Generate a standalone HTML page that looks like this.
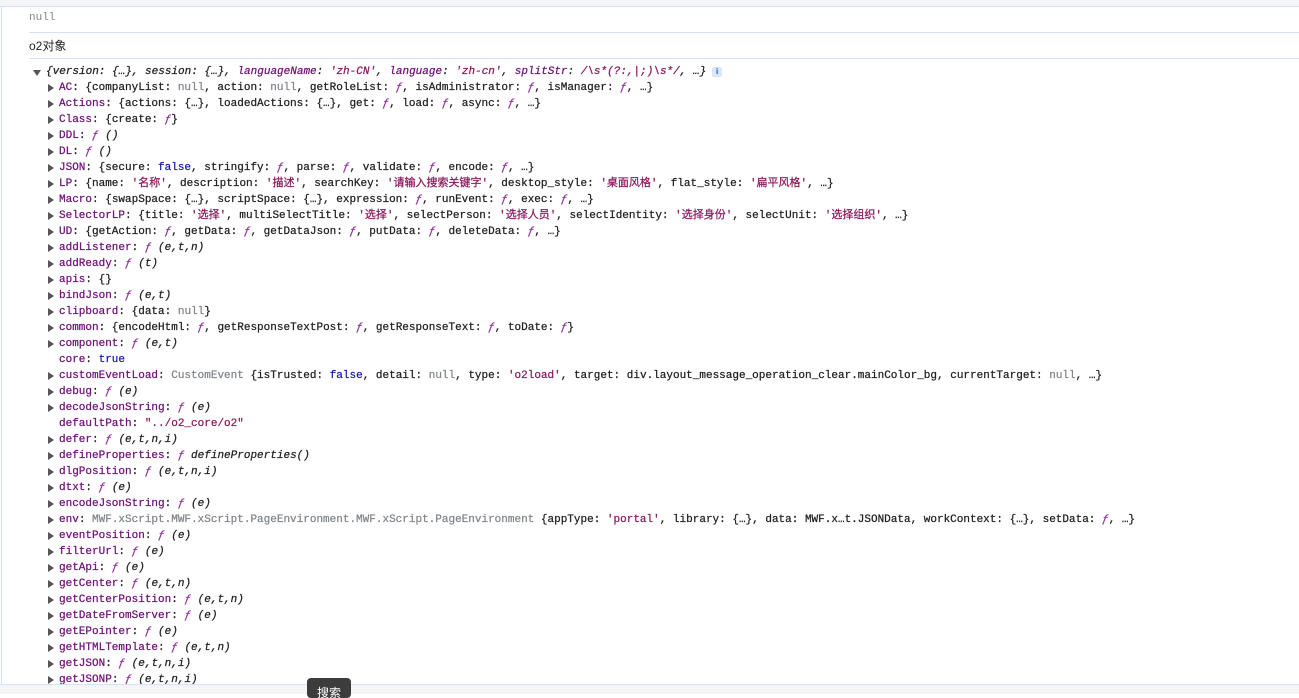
<!DOCTYPE html>
<html><head><meta charset="utf-8"><style>
body{margin:0;width:1299px;height:693px;overflow:hidden;background:#fff;position:relative;font-family:"Liberation Sans","Noto Sans CJK SC",sans-serif}
.top{position:absolute;left:0;top:0;width:1299px;height:6px;background:#f5f5f5;border-bottom:1px solid #d3e1fb}
.box{position:absolute;left:1px;top:7px;width:1298px;height:677px;border-left:1px solid #d3e1fb}
.hr{position:absolute;left:29px;right:0;height:1px;background:#d3e1fb}
.bot{position:absolute;left:0;top:684px;width:1299px;height:9px;background:#f5f5f5;border-top:1px solid #d3e1fb;z-index:2}
.null{position:absolute;left:29px;top:12px;font:11px "Liberation Mono",monospace;color:#80868b}
.o2{position:absolute;left:29px;top:37px;font-size:12px;color:#222}
.c{position:absolute;left:0;top:64px;font:11px/16px "Liberation Mono","Noto Sans CJK SC",monospace;color:#202124;white-space:nowrap;-webkit-text-stroke:0.25px}
.r{height:16px;position:relative;padding-left:59px}
.r.root{padding-left:46px}
.r.a::before{content:"";position:absolute;left:48px;top:4px;border-left:6px solid #555;border-top:4px solid transparent;border-bottom:4px solid transparent}
.root::before{content:"";position:absolute;left:33px;top:6px;border-top:6px solid #555;border-left:4px solid transparent;border-right:4px solid transparent}
.k{color:#6e1077}
.s{color:#8b1a5c}
.n{color:#80868b}
.b{color:#1a1aa6}
.f{color:#9230a0;font-style:italic}
.i{font-style:italic}
.it{font-style:italic}
.info{display:inline-block;width:10px;height:10px;background:#dbe6fb;color:#1a55c9;font:bold 8px/10px "Liberation Sans",sans-serif;text-align:center;border-radius:2px;margin-left:6px;vertical-align:0;-webkit-text-stroke:0}
.tip{position:absolute;left:307px;top:678px;width:44px;height:20px;background:#3c3c3c;border-radius:4px;color:#fff;font-size:12px;text-align:center;line-height:30px;z-index:3;overflow:hidden}
</style></head><body>
<div class="top"></div>
<div class="box"></div>
<div class="null">null</div>
<div class="hr" style="top:32px"></div>
<div class="o2">o2对象</div>
<div class="hr" style="top:58px"></div>
<div class="c"><div class="r root it">{version: {…}, session: {…}, <span class="k">languageName</span>: <span class="s">'zh-CN'</span>, <span class="k">language</span>: <span class="s">'zh-cn'</span>, <span class="k">splitStr</span>: <span class="s">/\s*(?:,|;)\s*/</span>, …}<span class="info">i</span></div><div class="r a"><span class="k">AC</span>: {companyList: <span class="n">null</span>, action: <span class="n">null</span>, getRoleList: <span class="f">ƒ</span>, isAdministrator: <span class="f">ƒ</span>, isManager: <span class="f">ƒ</span>, …}</div><div class="r a"><span class="k">Actions</span>: {actions: {…}, loadedActions: {…}, get: <span class="f">ƒ</span>, load: <span class="f">ƒ</span>, async: <span class="f">ƒ</span>, …}</div><div class="r a"><span class="k">Class</span>: {create: <span class="f">ƒ</span>}</div><div class="r a"><span class="k">DDL</span>: <span class="f">ƒ</span> <span class="i">()</span></div><div class="r a"><span class="k">DL</span>: <span class="f">ƒ</span> <span class="i">()</span></div><div class="r a"><span class="k">JSON</span>: {secure: <span class="b">false</span>, stringify: <span class="f">ƒ</span>, parse: <span class="f">ƒ</span>, validate: <span class="f">ƒ</span>, encode: <span class="f">ƒ</span>, …}</div><div class="r a"><span class="k">LP</span>: {name: <span class="s">'名称'</span>, description: <span class="s">'描述'</span>, searchKey: <span class="s">'请输入搜索关键字'</span>, desktop_style: <span class="s">'桌面风格'</span>, flat_style: <span class="s">'扁平风格'</span>, …}</div><div class="r a"><span class="k">Macro</span>: {swapSpace: {…}, scriptSpace: {…}, expression: <span class="f">ƒ</span>, runEvent: <span class="f">ƒ</span>, exec: <span class="f">ƒ</span>, …}</div><div class="r a"><span class="k">SelectorLP</span>: {title: <span class="s">'选择'</span>, multiSelectTitle: <span class="s">'选择'</span>, selectPerson: <span class="s">'选择人员'</span>, selectIdentity: <span class="s">'选择身份'</span>, selectUnit: <span class="s">'选择组织'</span>, …}</div><div class="r a"><span class="k">UD</span>: {getAction: <span class="f">ƒ</span>, getData: <span class="f">ƒ</span>, getDataJson: <span class="f">ƒ</span>, putData: <span class="f">ƒ</span>, deleteData: <span class="f">ƒ</span>, …}</div><div class="r a"><span class="k">addListener</span>: <span class="f">ƒ</span> <span class="i">(e,t,n)</span></div><div class="r a"><span class="k">addReady</span>: <span class="f">ƒ</span> <span class="i">(t)</span></div><div class="r a"><span class="k">apis</span>: {}</div><div class="r a"><span class="k">bindJson</span>: <span class="f">ƒ</span> <span class="i">(e,t)</span></div><div class="r a"><span class="k">clipboard</span>: {data: <span class="n">null</span>}</div><div class="r a"><span class="k">common</span>: {encodeHtml: <span class="f">ƒ</span>, getResponseTextPost: <span class="f">ƒ</span>, getResponseText: <span class="f">ƒ</span>, toDate: <span class="f">ƒ</span>}</div><div class="r a"><span class="k">component</span>: <span class="f">ƒ</span> <span class="i">(e,t)</span></div><div class="r"><span class="k">core</span>: <span class="b">true</span></div><div class="r a"><span class="k">customEventLoad</span>: <span class="n">CustomEvent</span> {isTrusted: <span class="b">false</span>, detail: <span class="n">null</span>, type: <span class="s">'o2load'</span>, target: div.layout_message_operation_clear.mainColor_bg, currentTarget: <span class="n">null</span>, …}</div><div class="r a"><span class="k">debug</span>: <span class="f">ƒ</span> <span class="i">(e)</span></div><div class="r a"><span class="k">decodeJsonString</span>: <span class="f">ƒ</span> <span class="i">(e)</span></div><div class="r"><span class="k">defaultPath</span>: <span class="s">"../o2_core/o2"</span></div><div class="r a"><span class="k">defer</span>: <span class="f">ƒ</span> <span class="i">(e,t,n,i)</span></div><div class="r a"><span class="k">defineProperties</span>: <span class="f">ƒ</span> <span class="i">defineProperties()</span></div><div class="r a"><span class="k">dlgPosition</span>: <span class="f">ƒ</span> <span class="i">(e,t,n,i)</span></div><div class="r a"><span class="k">dtxt</span>: <span class="f">ƒ</span> <span class="i">(e)</span></div><div class="r a"><span class="k">encodeJsonString</span>: <span class="f">ƒ</span> <span class="i">(e)</span></div><div class="r a"><span class="k">env</span>: <span class="n">MWF.xScript.MWF.xScript.PageEnvironment.MWF.xScript.PageEnvironment</span> {appType: <span class="s">'portal'</span>, library: {…}, data: MWF.x…t.JSONData, workContext: {…}, setData: <span class="f">ƒ</span>, …}</div><div class="r a"><span class="k">eventPosition</span>: <span class="f">ƒ</span> <span class="i">(e)</span></div><div class="r a"><span class="k">filterUrl</span>: <span class="f">ƒ</span> <span class="i">(e)</span></div><div class="r a"><span class="k">getApi</span>: <span class="f">ƒ</span> <span class="i">(e)</span></div><div class="r a"><span class="k">getCenter</span>: <span class="f">ƒ</span> <span class="i">(e,t,n)</span></div><div class="r a"><span class="k">getCenterPosition</span>: <span class="f">ƒ</span> <span class="i">(e,t,n)</span></div><div class="r a"><span class="k">getDateFromServer</span>: <span class="f">ƒ</span> <span class="i">(e)</span></div><div class="r a"><span class="k">getEPointer</span>: <span class="f">ƒ</span> <span class="i">(e)</span></div><div class="r a"><span class="k">getHTMLTemplate</span>: <span class="f">ƒ</span> <span class="i">(e,t,n)</span></div><div class="r a"><span class="k">getJSON</span>: <span class="f">ƒ</span> <span class="i">(e,t,n,i)</span></div><div class="r a"><span class="k">getJSONP</span>: <span class="f">ƒ</span> <span class="i">(e,t,n,i)</span></div></div>
<div class="bot"></div>
<div class="tip">搜索</div>
</body></html>
